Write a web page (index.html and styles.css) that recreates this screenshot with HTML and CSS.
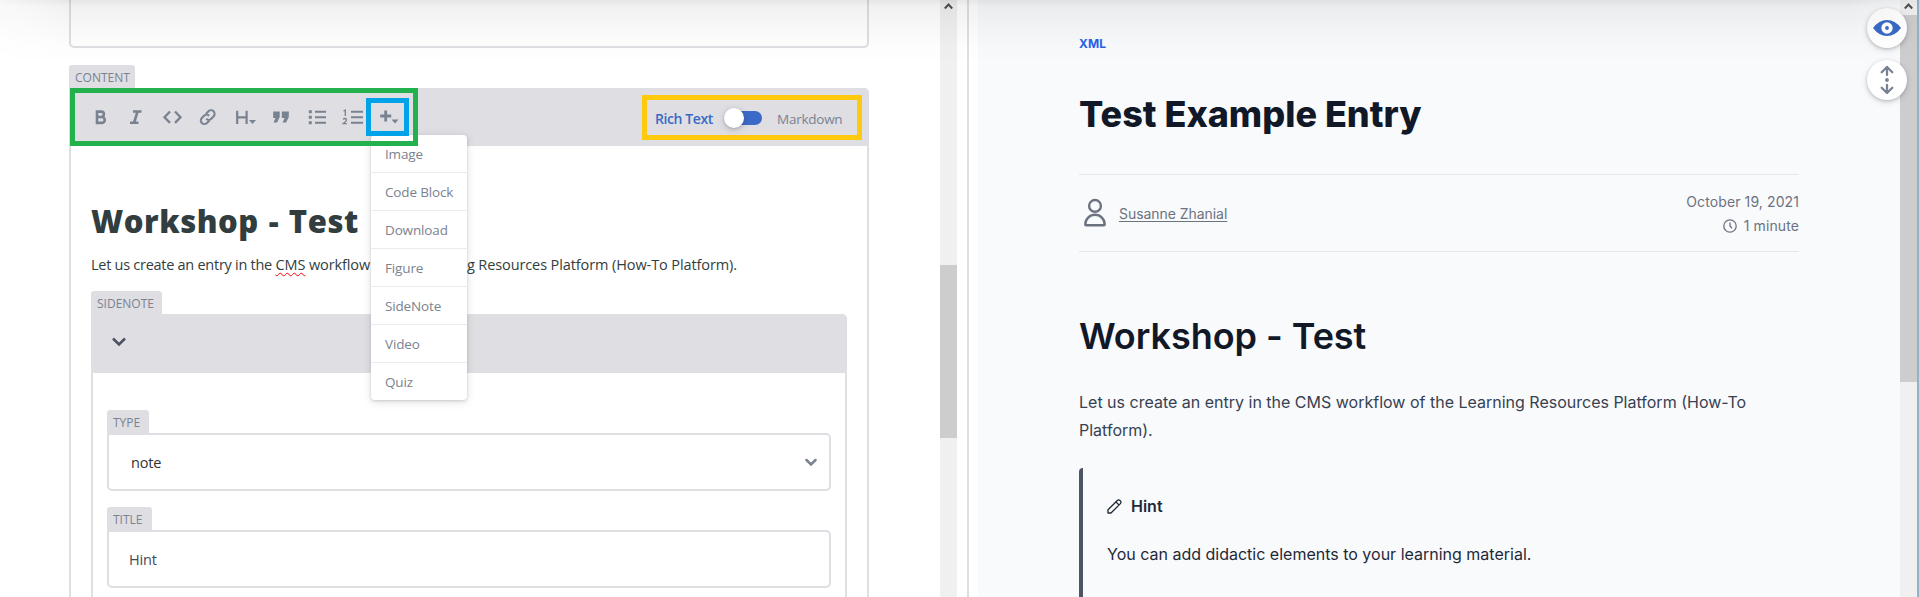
FILE: index.html
```html
<!DOCTYPE html>
<html lang="en">
<head>
<meta charset="utf-8">
<title>Entry editor</title>
<link rel="stylesheet" href="styles.css">
</head>
<body>
<div class="app">
  <section class="editor">
    <div class="form">
      <div class="prev-field"></div>
      <div class="label content-label">CONTENT</div>
      <div class="content-box">
        <div class="toolbar">
          <div class="tools">
            <svg class="tool-icons" width="338" height="48" viewBox="75 93 338 48" fill="none" stroke="#798291" stroke-width="2">
              <path stroke-width="2.6" d="M97 111.6h4.2a2.7 2.7 0 0 1 0 5.4H97zM97 117h4.800a2.900 2.900 0 0 1 0 5.900H97z"/>
              <path stroke-width="2.6" d="M133 111.5h8.5M130 122.700h8.500M137.600 111.500l-3.500 11"/>
              <path stroke-width="2.300" d="M170 111.500l-5.500 5.700 5.500 5.700M175 111.500l5.500 5.700-5.500 5.700"/>
              <g transform="translate(207.700 117.200) rotate(-45)"><path d="M-1 3.600h-3.700a3.600 3.600 0 0 1 0-7.200h3.200a3.600 3.600 0 0 1 3.600 3.600M1-3.600h3.700a3.600 3.600 0 0 1 0 7.200h-3.200a3.600 3.600 0 0 1-3.600-3.600"/></g>
              <path stroke-width="2.200" d="M237.200 110.700v13.200M246.600 110.700v13.200M237.200 117.300h9.400"/>
              <path fill="#798291" stroke="none" d="M249 120h7l-3.500 4zM273.200 111.500h6.500v5.500l-2.700 5.500h-3.500l2-4.500h-2.300zM281.800 111.500h7v5.500l-2.700 5.500h-3.500l2-4.500h-2.800z"/>
              <path d="M315 111.700h11M315 117.200h11M315 122.700h11M351 111.700h12M351 117.200h12M351 122.700h12"/>
              <path fill="#798291" stroke="none" d="M308.800 110.200h3v3h-3zM308.800 115.700h3v3h-3zM308.800 121.200h3v3h-3z"/>
              <path stroke-width="1.300" d="M343.500 111l1.800-1v6M343.200 119.500q.4-1 1.700-1 1.600 0 1.600 1.400 0 1-3.200 3.700h3.500"/>
              <path stroke-width="2.800" d="M385.700 110.500v11M380.200 116h11"/>
              <path fill="#798291" stroke="none" d="M391.500 119.500h7l-3.500 4z"/>
            </svg>
            <div class="plus-frame"></div>
            <div class="menu">
              <div>Image</div><div>Code Block</div><div>Download</div><div>Figure</div><div>SideNote</div><div>Video</div><div>Quiz</div>
            </div>
          </div>
          <div class="mode">
            <span class="rich">Rich Text</span>
            <span class="switch"><span class="knob"></span></span>
            <span class="mark">Markdown</span>
          </div>
        </div>
        <div class="doc">
          <h1>Workshop - Test</h1>
          <p><span class="lead">Let us create an entry in the </span><span class="misspelt">CMS</span> workflow of the Learning Resources Platform (How-To Platform).</p>
          <div class="label side-label">SIDENOTE</div>
          <div class="side-box">
            <div class="side-head"><svg width="14" height="10" viewBox="0 0 14 10" fill="none" stroke="#4b5160" stroke-width="2.500"><path d="M1 1.500l6 6 6-6"/></svg></div>
            <div class="fields">
              <div class="label type-label">TYPE</div>
              <div class="input select"><span>note</span><svg width="12" height="9" viewBox="0 0 12 9" fill="none" stroke="#7b8290" stroke-width="2.500" stroke-linecap="round"><path d="M1.500 2l4.500 4.500 4.500-4.500"/></svg></div>
              <div class="label title-label">TITLE</div>
              <div class="input hint">Hint</div>
            </div>
          </div>
        </div>
      </div>
    </div>
    <div class="scroll left-scroll">
      <svg width="17" height="15" viewBox="0 0 17 15" fill="none" stroke="#505050" stroke-width="2"><path d="M4.800 8.500l3.700-4 3.700 4"/></svg>
      <div class="thumb"></div>
    </div>
  </section>
  <section class="preview">
    <article>
      <div class="category">XML</div>
      <h1>Test Example Entry</h1>
      <div class="meta">
        <svg class="person" width="24" height="30" viewBox="0 0 24 30" fill="none" stroke="#6b7280" stroke-width="2.400" stroke-linejoin="round"><circle cx="12" cy="7.900" r="5.900"/><path d="M2.300 26.500a9.700 9.700 0 0 1 19.400 0q0 .7-.7.700h-18q-.7 0-.7-.7z"/></svg>
        <a class="author">Susanne Zhanial</a>
        <div class="when">
          <div>October 19, 2021</div>
          <div class="mins"><svg width="14" height="14" viewBox="0 0 14 14" fill="none" stroke="#6b7280" stroke-width="1.300"><circle cx="7" cy="7" r="6.200"/><path d="M7 3.500V7l2 2.300"/></svg><span>1 minute</span></div>
        </div>
      </div>
      <h2>Workshop - Test</h2>
      <p>Let us create an entry in the CMS workflow of the Learning Resources Platform (How-To Platform).</p>
      <aside>
        <div class="aside-title"><svg width="15" height="15" viewBox="0 0 15 15" fill="none" stroke="#1f2937" stroke-width="1.300" stroke-linejoin="round"><path d="M1 14v-3.200L10.300 1.500a1.900 1.900 0 0 1 2.700 0l.4.400a1.900 1.900 0 0 1 0 2.700L4 14zM8.900 2.900l3.100 3.100"/></svg><span>Hint</span></div>
        <div>You can add didactic elements to your learning material.</div>
      </aside>
    </article>
    <div class="scroll right-scroll">
      <svg width="17" height="15" viewBox="0 0 17 15" fill="none" stroke="#505050" stroke-width="2"><path d="M4.800 8.500l3.700-4 3.700 4"/></svg>
      <div class="thumb"></div>
    </div>
    <div class="edge"></div>
    <div class="round-buttons">
      <button><svg width="28" height="18" viewBox="0 0 28 18"><path fill="#3a69c7" d="M0 9Q6 1 14 1t14 8q-6 8-14 8T0 9z"/><circle cx="14" cy="9" r="5.700" fill="#fff"/><circle cx="14" cy="9" r="1.900" fill="#3a69c7"/></svg></button>
      <button><svg width="14" height="30" viewBox="0 0 14 30" fill="none" stroke="#798291" stroke-width="2.300"><path stroke-linecap="round" stroke-linejoin="round" d="M1.700 7.300L7 2l5.300 5.300M7 2v8M1.700 22.700L7 28l5.300-5.300M7 28v-8"/><circle cx="7" cy="15" r="1.900" fill="#798291" stroke="none"/></svg></button>
    </div>
  </section>
  <div class="top-shade"></div>
</div>
</body>
</html>
```
FILE: styles.css
```css
* { box-sizing: border-box; }
body { margin: 0; }
h1, h2, p { margin: 0; }
svg { display: block; flex: none; }
.app { position: relative; display: flex; width: 1919px; height: 597px; overflow: hidden; background: #fff; font-family: "Open Sans", "Noto Sans", sans-serif; }
.editor { width: 969px; display: flex; border-right: 2px solid #dfdfe3; flex: none; }
.form { width: 800px; margin-left: 69px; flex: none; }
.prev-field { height: 48px; border: 2px solid #dfdee3; border-top: 0; border-radius: 0 0 5px 5px; }
.label { width: fit-content; height: 23px; padding-left: 6px; border-radius: 3px 3px 0 0; background: #dfdee3; color: #798291; font-size: 12px; line-height: 26px; white-space: nowrap; }
.content-label { width: 66px; margin-top: 17px; }
.content-box { height: 520px; border: 2px solid #dfdee3; border-top: 0; border-radius: 0 5px 0 0; }
.toolbar { display: flex; justify-content: space-between; height: 58px; margin: 0 -2px; padding-left: 1px; padding-right: 7px; background: #dfdee3; border-radius: 0 5px 0 0; }
.tools { position: relative; width: 348px; height: 58px; padding: 5px; }
.tools::after { content: ""; position: absolute; z-index: 4; inset: 0; border: 5px solid #23b14d; pointer-events: none; }
.plus-frame { position: absolute; z-index: 5; left: 296px; top: 10px; width: 43px; height: 38px; border: 5px solid #00a2e8; }
.menu { position: absolute; z-index: 3; left: 301px; top: 47px; width: 96px; height: 265px; border-radius: 4px; background: #fff; box-shadow: 0 2px 8px rgba(68,74,87,.16), 0 1px 3px rgba(68,74,87,.2); color: #7b8290; font-size: 13.5px; }
.menu div { height: 38px; padding-left: 14px; border-bottom: 1px solid #eaebf1; line-height: 39px; white-space: nowrap; letter-spacing: -.15px; }
.menu div:last-child { border: 0; }
.mode { display: flex; align-items: center; width: 220px; height: 45px; margin-top: 7px; padding-left: 8px; border: 5px solid #ffc90e; font-size: 14px; line-height: 20px; white-space: nowrap; }
.rich { width: 70px; padding-top: 2px; color: #3a69c7; font-weight: 600; letter-spacing: -.4px; }
.mark { padding-top: 2px; color: #798291; font-size: 13.5px; letter-spacing: -.25px; }
.switch { position: relative; width: 36px; height: 14px; margin: 0 15px 0 1px; border-radius: 7px; background: #3a69c7; flex: none; }
.knob { position: absolute; left: -2px; top: -3px; width: 20px; height: 20px; border-radius: 50%; background: #fff; box-shadow: 0 2px 6px rgba(68,74,87,.25), 0 1px 3px rgba(68,74,87,.2); }
.doc { padding: 54px 20px 0; color: #313d3e; }
.doc h1 { height: 46px; font-size: 31px; line-height: 42px; font-weight: 800; letter-spacing: .55px; word-spacing: 1.2px; white-space: nowrap; }
.doc p { height: 45px; font-size: 14.5px; line-height: 38px; letter-spacing: -.1px; white-space: nowrap; }
.lead { letter-spacing: -.27px; }
.misspelt { text-decoration: underline wavy #f00 1px; text-underline-offset: 2px; }
.side-label { width: 71px; }
.side-box { width: 756px; height: 290px; border: 2px solid #dfdee3; border-top: 0; border-radius: 0 5px 0 0; }
.side-head { height: 59px; margin: 0 -2px; padding: 23px 0 0 21px; background: #dfdee3; border-radius: 0 5px 0 0; }
.fields { padding: 37px 14px 0; }
.type-label { width: 42px; }
.title-label { width: 45px; margin-top: 16px; }
.input { display: flex; align-items: center; width: 724px; height: 58px; border: 2px solid #dfdee3; border-radius: 0 5px 5px; font-size: 14.5px; letter-spacing: -.15px; color: #444a57; }
.select { justify-content: space-between; padding: 0 12px 0 22px; color: #333; }
.hint { padding: 0 0 0 20px; }
.scroll { width: 17px; height: 597px; background: #f0f0f0; flex: none; }
.thumb { background: #cdcdcd; }
.left-scroll { margin-left: 71px; }
.left-scroll .thumb { height: 173px; margin-top: 250px; }
.preview { position: relative; display: flex; width: 941px; margin-left: 9px; background: #f9fafc; font-family: Inter, sans-serif; }
article { width: 720px; margin-left: 101px; margin-right: 101px; flex: none; }
.category { margin-top: 34px; height: 20px; color: #2563eb; font-size: 12px; line-height: 20px; font-weight: 700; letter-spacing: .15px; }
article h1 { margin-top: 40px; height: 40px; color: #111827; font-size: 36px; line-height: 40px; font-weight: 800; white-space: nowrap; }
.meta { display: flex; align-items: center; height: 78px; margin-top: 40px; border: 1px solid #e5e7eb; border-width: 1px 0; color: #6b7280; font-size: 14px; line-height: 24px; }
.person { margin-left: 4px; }
.author { margin-left: 12px; padding-top: 2px; letter-spacing: -.05px; text-decoration: underline; text-underline-offset: 2px; }
.when { margin-left: auto; padding-top: 2px; text-align: right; letter-spacing: .1px; }
.mins { display: flex; justify-content: flex-end; align-items: center; gap: 7px; }
article h2 { height: 44px; margin-top: 62px; color: #111827; font-size: 36px; line-height: 44px; font-weight: 600; letter-spacing: -.05px; white-space: nowrap; }
article p { margin-top: 30px; color: #374151; font-size: 16px; line-height: 28px; }
aside { height: 140px; margin-top: 24px; padding: 24px 0 0 24px; border-left: 4px solid #4b5563; border-radius: 4px 0 0 0; color: #1f2937; font-size: 16px; line-height: 28px; }
.aside-title { display: flex; align-items: center; gap: 9px; margin-bottom: 20px; font-weight: 600; }
.right-scroll .thumb { height: 367px; }
.edge { width: 2px; background: #8fb4c8; }
.round-buttons { position: absolute; left: 889px; top: 8px; display: flex; flex-direction: column; gap: 12px; }
.round-buttons button { display: flex; align-items: center; justify-content: center; width: 40px; height: 40px; padding: 0; border: 0; border-radius: 50%; background: #fff; box-shadow: 0 2px 6px rgba(68,74,87,.2), 0 1px 3px rgba(68,74,87,.25); }
.top-shade { position: absolute; z-index: 6; left: 0; top: 0; width: 1919px; height: 62px; pointer-events: none; background: linear-gradient(rgba(14,18,26,.11), rgba(14,18,26,.06) 10%, rgba(14,18,26,.035) 40%, rgba(14,18,26,.01) 70%, transparent); -webkit-mask-image: linear-gradient(to right, rgba(0,0,0,.4), #000 70px, #000 1850px, rgba(0,0,0,.4)); mask-image: linear-gradient(to right, rgba(0,0,0,.4), #000 70px, #000 1850px, rgba(0,0,0,.4)); }
```
